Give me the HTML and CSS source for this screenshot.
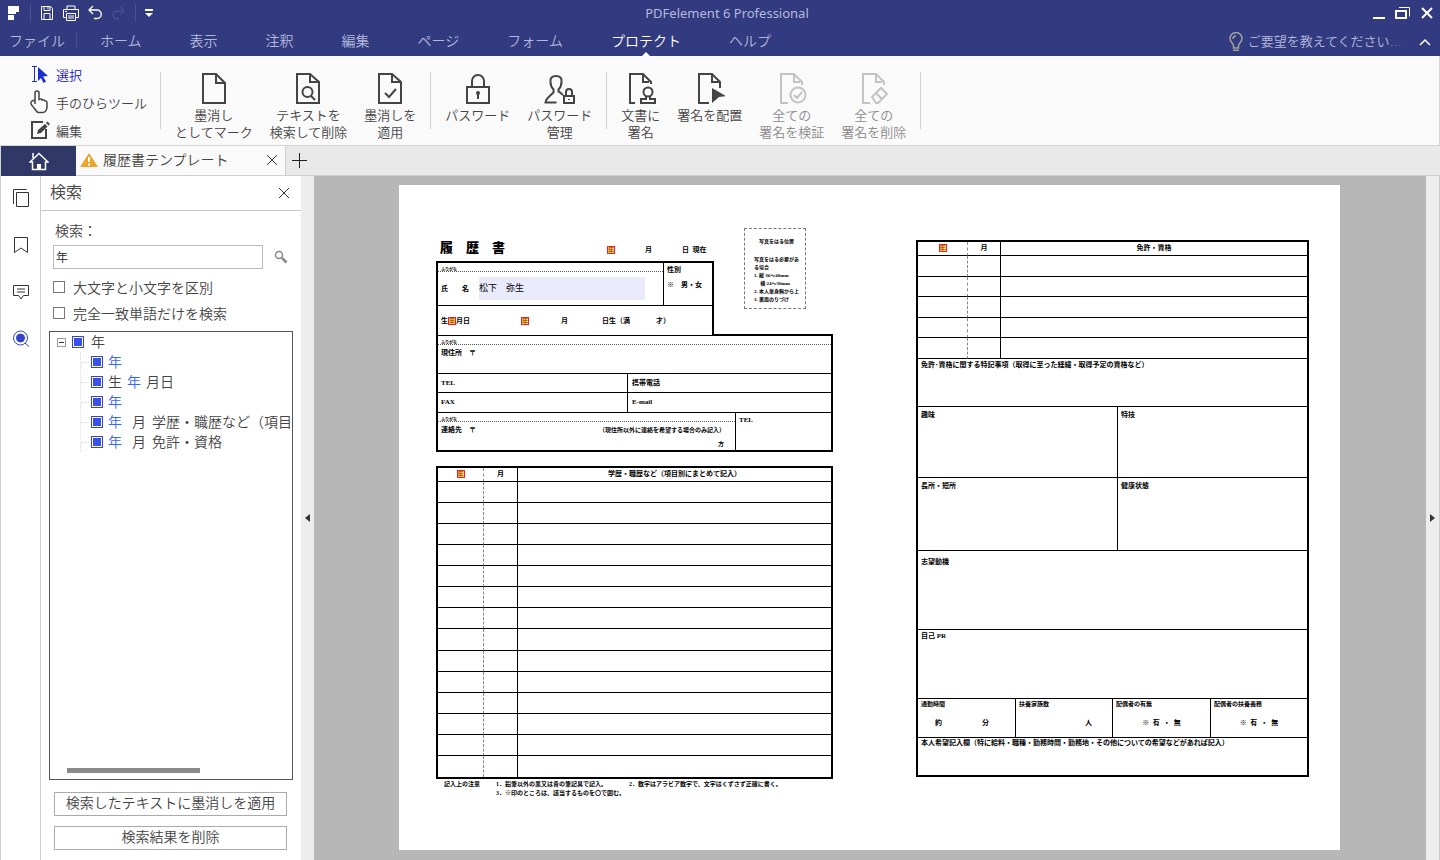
FILE: index.html
```html
<!DOCTYPE html>
<html lang="ja">
  <head>
    <meta charset="utf-8">
    <title>PDFelement 6 Professional</title>
    <link rel="stylesheet" href="styles.css">
  </head>
  <body>
    <header class="top">
      <div class="titlebar">
        <div class="quick">
          <svg class="logo" width="12" height="14" viewBox="0 0 12 14"><path d="M0 0h11v6H8v2H0zM0 9h6v5H0z" fill="#fff"/></svg>
          <span class="bar"></span>
          <button title="保存"><svg width="16" height="16" viewBox="0 0 16 16"><path d="M2.500 1.500h9l2 2v11h-11zM5 1.500v4h6v-4M9 2v2M5 14.500v-6h6v6"/></svg></button>
          <button title="印刷"><svg width="16" height="16" viewBox="0 0 16 16"><path d="M4 4V1h8v3M3.500 12.500h-3v-8h15v8h-3M3.500 8.500h9v7h-9zM5 11h6M5 13h6M2 6.500h2"/></svg></button>
          <button title="元に戻す"><svg width="16" height="16" viewBox="0 0 16 16"><path d="M6 1L2 5l4 4M2 5h8a4 4 0 0 1 0 8.500H7" stroke-width="1.300"/></svg></button>
          <button title="やり直す" class="faint" disabled><svg width="16" height="16" viewBox="0 0 16 16"><path d="M9 2l4 4-4 4M13 6H6a4 4 0 0 0 0 8h2"/></svg></button>
          <span class="bar"></span>
          <button title="カスタマイズ"><svg width="10" height="10" viewBox="0 0 10 10"><path d="M1 1h8v2H1zM1 5h8L5 9z" fill="#fff" stroke="none"/></svg></button>
        </div>
        <h1>PDFelement 6 Professional</h1>
        <div class="window">
          <button title="最小化"><svg width="16" height="14" viewBox="0 0 16 14"><path d="M2 12h12" stroke-width="2"/></svg></button>
          <button title="元のサイズ"><svg width="16" height="14" viewBox="0 0 16 14"><path d="M4 1.500h10.500v9" stroke-width="1"/><path d="M1 5h10v7H1z" stroke-width="2"/></svg></button>
          <button title="閉じる"><svg width="16" height="14" viewBox="0 0 16 14"><path d="M3 2l10 10M13 2L3 12" stroke-width="2"/></svg></button>
        </div>
      </div>
      <nav class="menu">
        <a href="#" class="file">ファイル</a>
        <a href="#">ホーム</a>
        <a href="#">表示</a>
        <a href="#">注釈</a>
        <a href="#">編集</a>
        <a href="#">ページ</a>
        <a href="#">フォーム</a>
        <a href="#" class="current">プロテクト</a>
        <a href="#">ヘルプ</a>
        <a href="#" class="tell">
          <svg width="16" height="20" viewBox="0 0 16 20"><path d="M5.500 16v-2.500C5 11 2 10 2 6.500a6 6 0 0 1 12 0C14 10 11 11 10.500 13.500V16zM5 7a3 3 0 0 1 3-3" fill="none" stroke="#a3a39e" stroke-width="1.500"/><path d="M5 17.500h6v1.500H5z" fill="#a3a39e"/></svg>
          ご要望を教えてください...
        </a>
        <button class="fold" title="リボンを折りたたむ"><svg width="12" height="8" viewBox="0 0 12 8"><path d="M1 7l5-5 5 5" fill="none" stroke="#fff" stroke-width="1.500"/></svg></button>
      </nav>
    </header>

    <div class="ribbon">
      <div class="modes">
        <button class="on"><svg width="20" height="20" viewBox="0 0 20 20"><path d="M2 2.500h5M4.500 2.500v15M2 17.500h5" fill="none" stroke="#1a2fd0"/><path d="M8 3l10 9-5 .5 3 5-2.500 1.500-2.500-5L8 17z" fill="#1a2fd0"/></svg>選択</button>
        <button><svg width="20" height="24" viewBox="0 0 20 24"><path d="M5 14V3a2 2 0 0 1 4 0v6.500c1.500-1 2.700-.5 3 .5 1.500-.5 2.600 0 3 1 1.400-.3 2 .5 2 2v4c0 3-2 5.500-4 5.500H8c-2-1-4-5-6-7-1.500-2-1.500-3.500 0-4.500l3-1" fill="none" stroke="#444" stroke-width="1.500"/></svg>手のひらツール</button>
        <button><svg width="20" height="20" viewBox="0 0 20 20"><path d="M13 2H2v16h14v-9" fill="none" stroke="#444" stroke-width="2"/><path d="M7 14l1-4 7-6 2.500 2.500L11 13zM16 3l1.500-1.500L20 4l-1.500 1.500z" fill="#444"/></svg>編集</button>
      </div>
      <div class="group">
        <button><svg width="30" height="32" viewBox="0 0 30 32"><path d="M4 2h13l9 9v20H4zM17 2v9h8"/></svg>墨消し<br>としてマーク</button>
        <button><svg width="30" height="32" viewBox="0 0 30 32"><path d="M4 2h13l9 8v21H4zM17 2v8h8"/><circle cx="14.500" cy="20" r="5"/><path d="M18 24l4 4"/></svg>テキストを<br>検索して削除</button>
        <button><svg width="30" height="32" viewBox="0 0 30 32"><path d="M4 2h13l9 8v21H4zM17 2v8h8M10 21l4 4 7-8"/></svg>墨消しを<br>適用</button>
      </div>
      <div class="group">
        <button><svg width="30" height="32" viewBox="0 0 30 32"><path d="M4 15h22v16H4zM9 15V9a6 6 0 0 1 12 0v6M15 22v5"/><circle cx="15" cy="21" r="1"/></svg>パスワード</button>
        <button><svg width="32" height="32" viewBox="0 0 32 32"><path d="M15 19.500l4 3.500M12 4c4 0 6 2 5.500 6 0 4-1.500 6-3 7.500v3M12 4c-4 0-6 2-5.500 6 0 4 1.500 6 3 7.500v3C6 24 2 26 1.500 30.500h11"/><path d="M20 24h10v7H20zM22 24v-4a3 3 0 0 1 6 0v4M25 27v1"/></svg>パスワード<br>管理</button>
      </div>
      <div class="group">
        <button><svg width="30" height="32" viewBox="0 0 30 32"><path d="M9 31H4V2h13l8 8v2M17 2v8h6"/><circle cx="22" cy="20" r="4.500"/><path d="M20 24v3h-5v4h14v-4h-5v-3"/></svg>文書に<br>署名</button>
        <button><svg width="30" height="32" viewBox="0 0 30 32"><path d="M14 31H4V2h13l8 8v6M17 2v8h8"/><path d="M17 16l14 8-7 1-7 6z" fill="#444" stroke="none"/></svg>署名を配置</button>
        <button disabled><svg width="30" height="32" viewBox="0 0 30 32"><path d="M11 31H4V2h13l8 8v3M17 2v8h6"/><circle cx="21" cy="23" r="7.500"/><path d="M17 23l3 3 5-6"/></svg>全ての<br>署名を検証</button>
        <button disabled><svg width="30" height="32" viewBox="0 0 30 32"><path d="M11 31H4V2h13l8 8v3M17 2v8h6M13 25l9-9 6 6-9 9h-2zM17 21l6 6"/></svg>全ての<br>署名を削除</button>
      </div>
      <div class="group"></div>
    </div>

    <div class="tabs">
      <a href="#" class="home" title="ホーム"><svg width="20" height="20" viewBox="0 0 20 20"><path d="M1 11l9-8.500 9 8.500h-2.500v7.500h-13V11zM4 7V2" fill="none" stroke="#fff" stroke-width="1.500"/><path d="M8 13h4v5H8z" fill="#fff"/></svg></a>
      <div class="tab">
        <svg width="20" height="16" viewBox="0 0 20 16"><path d="M10 1l9 14H1z" fill="#eba52c"/><path d="M10 5v5M10 11.500v2" stroke="#fff" stroke-width="2"/></svg>
        <span>履歴書テンプレート</span>
        <button title="タブを閉じる"><svg width="12" height="12" viewBox="0 0 12 12"><path d="M1 1l10 10M11 1L1 11" stroke="#333"/></svg></button>
      </div>
      <div class="rest">
        <button title="新しいタブ"><svg width="16" height="16" viewBox="0 0 16 16"><path d="M7.500 0v15M0 7.500h15" stroke="#222"/></svg></button>
      </div>
    </div>

    <main class="work">
      <nav class="rail">
        <button title="ページ"><svg width="18" height="20" viewBox="0 0 18 20"><path d="M4.500 4.500h12v14h-12zM1.500 16V1.500h13"/></svg></button>
        <button title="ブックマーク"><svg width="18" height="20" viewBox="0 0 18 20"><path d="M2.500 2.500h13v15L9 13l-6.500 4.500z"/></svg></button>
        <button title="コメント"><svg width="18" height="20" viewBox="0 0 18 20"><path d="M1.500 3.500h15v10h-5L9 17l-2.500-3.500h-5zM5 7h8M5 10h8"/></svg></button>
        <button title="検索"><svg width="18" height="20" viewBox="0 0 18 20"><circle cx="8.500" cy="9" r="4" fill="#3344cc" stroke="#3344cc"/><circle cx="8.500" cy="9" r="7" stroke="#3344cc"/><path d="M13 14l4 3.500" stroke="#3344cc"/></svg></button>
      </nav>

      <section class="panel">
        <div class="head">
          <h2>検索</h2>
          <button title="閉じる"><svg width="12" height="12" viewBox="0 0 12 12"><path d="M1 1l10 10M11 1L1 11" stroke="#333"/></svg></button>
        </div>
        <form class="search">
          <label class="caption" for="term">検索：</label>
          <div class="find">
            <input type="text" id="term" value="年">
            <button type="button" title="検索"><svg width="14" height="14" viewBox="0 0 14 14"><circle cx="5" cy="5" r="3.500" fill="none" stroke="#888" stroke-width="1.500"/><path d="M8 8l4.500 4.500" stroke="#888" stroke-width="2.500"/></svg></button>
          </div>
          <label class="check"><input type="checkbox">大文字と小文字を区別</label>
          <label class="check"><input type="checkbox">完全一致単語だけを検索</label>
          <div class="tree">
            <div class="root"><button type="button" class="minus" title="折りたたむ"></button><label><input type="checkbox" checked>年</label></div>
            <ul>
              <li><label><input type="checkbox" checked><b>年</b></label></li>
              <li><label><input type="checkbox" checked>生<b class="mid">年</b>月日</label></li>
              <li><label><input type="checkbox" checked><b>年</b></label></li>
              <li><label><input type="checkbox" checked><b class="first">年</b>月<span>学歴・職歴など（項目</span></label></li>
              <li><label><input type="checkbox" checked><b class="first">年</b>月<span>免許・資格</span></label></li>
            </ul>
            <div class="thumb"></div>
          </div>
          <button type="button" class="action">検索したテキストに墨消しを適用</button>
          <button type="button" class="action">検索結果を削除</button>
        </form>
      </section>

      <button class="split" title="パネルを隠す"><svg width="5" height="8" viewBox="0 0 5 8"><path d="M5 0v8L0 4z" fill="#333"/></svg></button>

      <div class="canvas">
        <article class="sheet">
          <div class="left">
            <div class="intro">
              <div class="person">
                <div class="heading">
                  <h3><span>履</span><span>歴</span><span>書</span></h3>
                  <p class="date"><mark>年</mark><span>月</span><span>日&ensp;現在</span></p>
                </div>
                <div class="box who">
                  <div class="names">
                    <div class="kana">ふりがな</div>
                    <div class="name"><span>氏</span><span>名</span><span class="field">松下　弥生</span></div>
                  </div>
                  <div class="sex"><p>性別</p><p>※　男・女</p></div>
                  <div class="born"><span class="birth">生<mark>年</mark>月日</span><mark>年</mark><span>月</span><span>日生（満</span><span>才）</span></div>
                </div>
              </div>
              <div class="corner">
                <div class="photo">
                  <p class="where">写真をはる位置</p>
                  <p>写真をはる必要があ<br>る場合</p>
                  <p>1. 縦 36～40mm<br>　 横 24～30mm<br>2. 本人単身胸から上<br>3. 裏面のりづけ</p>
                </div>
              </div>
            </div>
            <div class="box contact">
              <div class="kana">ふりがな</div>
              <div class="address">現住所　〒</div>
              <div class="pair"><div>TEL</div><div>携帯電話</div></div>
              <div class="pair fax"><div>FAX</div><div>E-mail</div></div>
              <div class="second">
                <div>
                  <div class="kana">ふりがな</div>
                  <div class="line"><span>連絡先　〒</span><span class="small">（現住所以外に連絡を希望する場合のみ記入）</span></div>
                  <div class="small care">方</div>
                </div>
                <div class="tel">TEL</div>
              </div>
            </div>
            <table class="box history">
              <thead><tr><th class="year"><mark>年</mark></th><th class="month">月</th><th>学歴・職歴など（項目別にまとめて記入）</th></tr></thead>
              <tbody>
                <tr><td></td><td></td><td></td></tr>
                <tr><td></td><td></td><td></td></tr>
                <tr><td></td><td></td><td></td></tr>
                <tr><td></td><td></td><td></td></tr>
                <tr><td></td><td></td><td></td></tr>
                <tr><td></td><td></td><td></td></tr>
                <tr><td></td><td></td><td></td></tr>
                <tr><td></td><td></td><td></td></tr>
                <tr><td></td><td></td><td></td></tr>
                <tr><td></td><td></td><td></td></tr>
                <tr><td></td><td></td><td></td></tr>
                <tr><td></td><td></td><td></td></tr>
                <tr><td></td><td></td><td></td></tr>
                <tr><td></td><td></td><td></td></tr>
              </tbody>
            </table>
            <div class="notes">
              <span>記入上の注意</span>
              <p>1．鉛筆以外の黒又は青の筆記具で記入。<span>2．数字はアラビア数字で、文字はくずさず正確に書く。</span><br>3．※印のところは、該当するものを〇で囲む。</p>
            </div>
          </div>

          <div class="right box">
            <table class="licence">
              <thead><tr><th class="year"><mark>年</mark></th><th class="month">月</th><th>免許・資格</th></tr></thead>
              <tbody>
                <tr><td></td><td></td><td></td></tr>
                <tr><td></td><td></td><td></td></tr>
                <tr><td></td><td></td><td></td></tr>
                <tr><td></td><td></td><td></td></tr>
                <tr><td></td><td></td><td></td></tr>
              </tbody>
            </table>
            <div class="row remark">免許･資格に関する特記事項（取得に至った経緯・取得予定の資格など）</div>
            <div class="row two hobby"><div>趣味</div><div>特技</div></div>
            <div class="row two merit"><div>長所・短所</div><div>健康状態</div></div>
            <div class="row motive">志望動機</div>
            <div class="row pr">自己 PR</div>
            <div class="row four">
              <div>通勤時間<p class="ends"><span>約</span><span>分</span></p></div>
              <div>扶養家族数<p class="last">人</p></div>
              <div>配偶者の有無<p>※&ensp;有&ensp;・&ensp;無</p></div>
              <div>配偶者の扶養義務<p>※&ensp;有&ensp;・&ensp;無</p></div>
            </div>
            <div class="row wish">本人希望記入欄（特に給料・職種・勤務時間・勤務地・その他についての希望などがあれば記入）</div>
          </div>
        </article>
      </div>

      <button class="split right-split" title="パネルを表示"><svg width="5" height="8" viewBox="0 0 5 8"><path d="M0 0v8l5-4z" fill="#333"/></svg></button>
    </main>
  </body>
</html>
```

FILE: styles.css
```css
* { box-sizing: border-box; }

body { margin: 0; min-height: 100vh; display: flex; flex-direction: column;
       font-family: "Noto Sans", "Noto Sans CJK JP", sans-serif;
       font-size: 14px; font-weight: 350; color: #444; background: #fff; }

h1, h2, h3, p, ul { margin: 0; padding: 0; font-weight: inherit; }
a { color: inherit; text-decoration: none; }
button { border: 0; padding: 0; background: none; font: inherit; color: inherit; }
svg { display: block; flex: none; }

/* title bar and menu */
.top { background: #323a80; color: #b4b9dc; }
.titlebar { display: grid; grid-template-columns: 1fr auto 1fr; align-items: center; height: 27px; padding-bottom: 2px; }
.titlebar h1 { font-size: 13px; line-height: 20px; font-weight: 400; padding-left: 14px; }
.titlebar svg { fill: none; stroke: #fff; }
.quick { display: flex; align-items: center; gap: 8px; padding-left: 8px; }
.quick .bar { width: 1px; height: 18px; background: #4a5192; }
.quick .logo { stroke: none; margin-right: 2px; }
.quick .faint { opacity: 0.15; }
.window { display: flex; justify-content: flex-end; gap: 8px; padding-right: 5px; }

.menu { display: flex; align-items: center; gap: 48px; height: 29px; padding: 0 9px 0 9px; line-height: 27px; }
.menu a { height: 29px; white-space: nowrap; }
.menu .file { position: relative; margin-right: -13px; }
.menu .file::after { content: ""; position: absolute; right: -12px; top: 6px; width: 1px; height: 15px; background: #4a5192; }
.menu .current { position: relative; color: #fff; }
.menu .current::after { content: ""; position: absolute; left: 50%; bottom: 0; margin-left: -4px;
                        border: 4px solid transparent; border-top: 0; border-bottom: 4px solid #fff; }
.menu .tell { display: flex; align-items: center; gap: 4px; margin-left: auto; font-family: "DejaVu Sans", "Noto Sans CJK JP", sans-serif; font-size: 13px; }
.menu .fold { margin-left: -31px; }

/* ribbon */
.ribbon { display: flex; height: 90px; padding: 0 0 0 30px; background: #fafafa; border: solid #d5d5d5; border-width: 0 1px 1px 0; font-size: 13px; }
.modes { display: flex; flex-direction: column; padding: 4px 13px 0 0; }
.modes button { display: flex; align-items: center; gap: 6px; height: 28px; white-space: nowrap; }
.modes .on { color: #1a1ad6; }
.group { display: flex; align-items: flex-start; gap: 17px; height: 57px; margin-top: 16px;
         padding: 0 14px; border-left: 1px solid #d0d0d0; }
.group button { display: block; line-height: 17px; white-space: nowrap; text-align: center; }
.group svg { margin: 0 auto 3px; fill: none; stroke: #444; stroke-width: 2; }
.group button:disabled { color: #8a8a8a; }
.group button:disabled svg { stroke: #c3c3c3; }

/* document tabs */
.tabs { display: flex; height: 30px; }
.home { display: flex; align-items: center; justify-content: center; width: 76px; background: #303868; border-left: 1px solid #d5d5d5; }
.tab { display: flex; align-items: center; gap: 4px; width: 210px; padding: 0 7px 1px 3px; background: #fafafa;
       border: solid #cfcfcf; border-width: 0 1px 1px 0; }
.tab span { flex: 1; line-height: 28px; white-space: nowrap; }
.rest { flex: 1; display: flex; align-items: center; padding-left: 6px; background: #e9e9e9; border-bottom: 1px solid #cfcfcf; }

.work { flex: 1; display: flex; }
.rail { display: flex; flex-direction: column; gap: 4px; width: 41px; border: solid #ccc; border-width: 0 1px; }
.rail button { display: flex; align-items: center; justify-content: center; height: 43px; }
.rail svg { fill: none; stroke: #333; }

/* search panel */
.panel { display: flex; flex-direction: column; flex: none; width: 260px; }
.head { display: flex; justify-content: space-between; align-items: center; height: 35px; padding: 0 11px 0 9px; border-bottom: 1px solid #c8c8c8; }
.head h2 { height: 34px; font-size: 16px; line-height: 32px; }
.search { flex: 1; display: flex; flex-direction: column; padding: 10px 8px; }
.caption { padding-left: 6px; line-height: 20px; }
.find { display: flex; align-items: center; gap: 11px; margin: 4px 4px 5px; }
.find input { width: 210px; height: 24px; padding: 0 2px; border: 1px solid #bbb; font: inherit; font-size: 12px; color: #222; }
.check { display: flex; align-items: center; gap: 8px; height: 26px; padding-left: 4px; }
input[type=checkbox] { appearance: none; flex: none; width: 12px; height: 12px; margin: 0; border: 1px solid #777; background: #fff; }
input[type=checkbox]:checked { border-color: #3344dd; background: #3a50e8; box-shadow: inset 0 0 0 1px #fff; }

.tree { flex: 1; display: flex; flex-direction: column; margin: 5px 0 12px; border: 1px solid #555; overflow: hidden; }
.tree label { display: flex; align-items: center; white-space: nowrap; line-height: 18px; }
.tree input { margin-right: 5px; }
.tree b { font-weight: inherit; color: #3366ff; }
.tree .mid { margin: 0 5px; }
.tree .first { margin-right: 10px; }
.tree label span { margin-left: 6px; }
.root { display: flex; align-items: center; gap: 6px; height: 20px; padding-left: 7px; }
.root input { margin-right: 7px; }
.minus { display: flex; align-items: center; justify-content: center; width: 9px; height: 9px; border: 1px solid #999; }
.minus::before { content: ""; width: 5px; height: 1px; background: #334; }
.tree ul { margin-left: 30px; list-style: none; border-left: 1px dotted #ddd; }
.tree li { display: flex; align-items: center; height: 20px; }
.tree li::before { content: ""; flex: none; width: 8px; margin-right: 2px; border-top: 1px dotted #ddd; }
.thumb { width: 133px; height: 5px; margin: auto 0 6px 17px; background: #8a8a8a; }
.action { height: 24px; margin: 0 8px 0 5px; padding-bottom: 2px; line-height: 20px; border: 1px solid #aaa; background: #fff; }
.search .action { margin-right: 6px; }
.action + .action { margin-top: 10px; }

.split { display: flex; align-items: center; justify-content: center; flex: none; width: 13px; background: #ededed; }
.right-split { width: 14px; border-right: 1px solid #ccc; }

/* the open document */
.canvas { flex: 1; display: flex; padding: 9px 86px 10px 85px; background: #b7b7b7; }
.sheet { flex: 1; display: grid; grid-template-columns: 397fr 393fr; column-gap: 83px; align-items: start;
         padding: 43px 31px 50px 37px; background: #fff; color: #000;
         font-family: "Liberation Serif", "Noto Sans CJK JP", serif; font-size: 7px; line-height: 10px; font-weight: 600; }
.box { border: 2px solid #000; }
.sheet mark { display: inline-block; width: 8px; height: 8px; border: 1px solid #e22; background: #fbd774;
              color: #a50; font-size: 6px; line-height: 6px; text-align: center; vertical-align: middle; }
.small { font-size: 6px; }

.intro { display: grid; grid-template-columns: 278px 1fr; }
.heading { display: flex; align-items: center; height: 33px; padding: 6px 7px 0 4px; }
.heading h3 { display: flex; gap: 13px; font-size: 13px; line-height: 16px; font-weight: 900; }
.date { display: flex; flex: 1; align-items: center; gap: 30px; margin-left: 102px; padding-top: 4px; line-height: 10px; white-space: nowrap; }
.who { display: grid; grid-template-columns: 1fr 49px; border-bottom-width: 1px; }
.kana { height: 9px; padding: 4px 3px 0; overflow: hidden; border-bottom: 1px dotted #555; font-size: 4px; line-height: 6px; }
.name { display: flex; align-items: center; gap: 14px; height: 33px; padding-left: 3px; }
.name .field { flex: 1; height: 23px; margin: 0 18px 0 -4px; background: #e9ebfd; font-size: 9px; line-height: 23px; font-weight: 400; }
.sex { border-left: 1px solid #000; padding: 2px 3px; }
.sex p + p { margin-top: 5px; }
.born { grid-column: 1 / 3; display: flex; align-items: center; height: 30px; padding-left: 3px; border-top: 1px solid #000; }
.born > mark { margin: 0 32px 0 51px; }
.born span + span { margin-left: 34px; }
.born span:last-child { margin-left: 26px; }
.corner { border-bottom: 2px solid #000; }
.photo { width: 62px; height: 81px; margin-left: 30px; padding: 9px 4px 0 9px; border: 1px dashed #777;
         font-size: 5px; line-height: 8px; white-space: nowrap; }
.photo .where { margin: 0 0 10px 5px; }

.contact { border-top: 0; }
.address { height: 29px; padding: 3px; border-bottom: 1px solid #000; }
.pair { display: grid; grid-template-columns: 189fr 204fr; line-height: 18px; border-bottom: 1px solid #000; }
.pair.fax { line-height: 19px; }
.pair div { padding-left: 3px; }
.pair div + div { border-left: 1px solid #000; padding-left: 4px; }
.second { display: grid; grid-template-columns: 297fr 96fr; height: 37px; }
.line { display: flex; justify-content: space-between; padding: 3px 10px 0 3px; }
.care { padding: 4px 11px 0 0; text-align: right; }
.tel { padding: 2px 3px; border-left: 1px solid #000; }

table { width: 100%; border-spacing: 0; table-layout: fixed; }
th, td { padding: 0; font-weight: inherit; border-bottom: 1px solid #000; border-right: 1px solid #000; }
th:last-child, td:last-child { border-right: 0; }
th:first-child, td:first-child { border-right: 1px dashed #888; }
thead tr { height: 14px; }
th { line-height: 11px; }
.history { height: 313px; margin-top: 14px; }
.history .year { width: 46px; }
.history .month { width: 34px; }
.history td { height: 21px; }
.history tbody tr:last-child td { border-bottom: 0; }
.notes { display: flex; gap: 16px; padding: 1px 8px 0; font-size: 6px; line-height: 9px; white-space: nowrap; }
.notes p span { margin-left: 22px; }

.right { margin-top: 12px; }
.licence { height: 117px; }
.licence .year { width: 50px; }
.licence .month { width: 33px; }
.licence td { height: 20px; }
.row { border-bottom: 1px solid #000; padding: 1px 3px; }
.row:last-child { border-bottom: 0; }
.remark { height: 48px; }
.two, .four { display: grid; padding: 0; }
.two { grid-template-columns: 199fr 190fr; }
.two div { padding: 3px; }
.row > div + div { border-left: 1px solid #000; }
.hobby { height: 71px; }
.merit { height: 73px; }
.motive { height: 79px; padding-top: 6px; }
.pr { height: 69px; }
.four { grid-template-columns: 97fr 97fr 98fr 97fr; height: 39px; font-size: 6px; }
.four div { padding: 0 3px; }
.four p { margin-top: 9px; font-size: 7px; text-align: center; }
.four .ends { display: flex; justify-content: space-between; padding: 0 23px 0 14px; }
.four .last { text-align: right; padding-right: 17px; }
.wish { height: 37px; padding-top: 0; }
```
